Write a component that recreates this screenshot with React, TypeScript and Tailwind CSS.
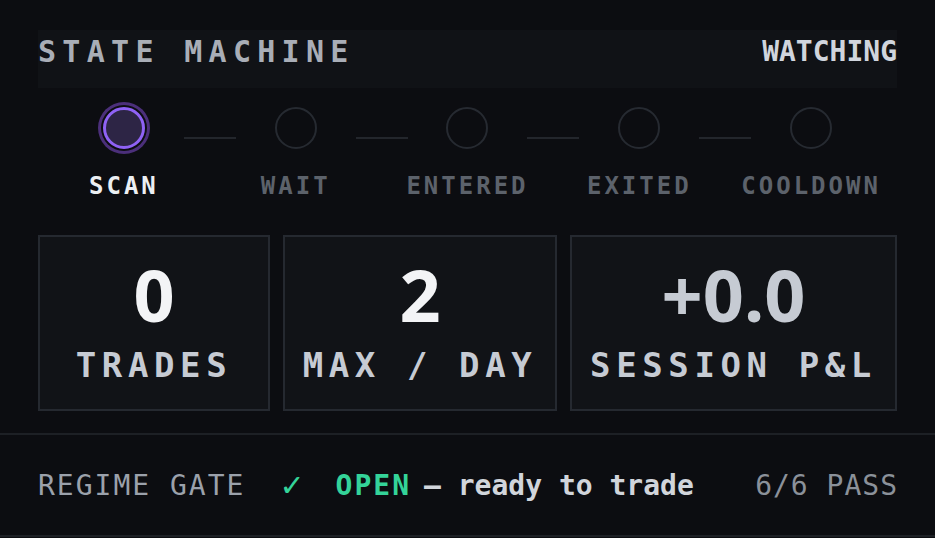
import React from 'react';

const mono = { fontFamily: '"DejaVu Sans Mono", "Liberation Mono", monospace' };

const steps = ['SCAN', 'WAIT', 'ENTERED', 'EXITED', 'COOLDOWN'];

const stats = [
  { value: '0', label: 'TRADES', width: 'w-[232px]', tone: 'text-[#f3f4f6]' },
  { value: '2', label: 'MAX / DAY', width: 'w-[274px]', tone: 'text-[#f3f4f6]' },
  { value: '+0.0', label: 'SESSION P&L', width: 'flex-1', tone: 'text-[#c6cbd3]' },
];

export default function App() {
  const active = 0;

  return (
    <div className="min-h-screen w-full bg-[#0c0d11] pt-[30px]" style={mono}>
      {/* header strip */}
      <div className="mx-[38px] h-[58px] bg-[#101216] flex items-start justify-between pt-[7px]">
        <h2 className="text-[30px] leading-[30px] font-bold tracking-[6.3px] text-[#a9aeb7]">STATE MACHINE</h2>
        <span className="text-[28px] leading-[30px] font-bold text-[#d0d5dd]">WATCHING</span>
      </div>

      {/* state steps */}
      <div className="mx-[38px] mt-[19px] grid grid-cols-5">
        {steps.map((s, i) => (
          <div key={s} className="relative flex flex-col items-center">
            {i === active ? (
              <div className="w-[42px] h-[42px] rounded-full border-[3px] border-[#8f62f5] bg-[#2d2545] shadow-[0_0_0_2px_#0c0d11,0_0_0_5px_#4b2f7a]" />
            ) : (
              <div className="w-[42px] h-[42px] rounded-full border-2 border-[#262a31]" />
            )}
            {i < steps.length - 1 && (
              <div className="absolute top-[30px] right-[-26px] w-[52px] h-[2px] bg-[#23262c]" />
            )}
            <span
              className={`mt-[25px] text-[24px] leading-[24px] font-bold tracking-[3px] ${
                i === active ? 'text-[#eceff3]' : 'text-[#5c626b]'
              }`}
            >
              {s}
            </span>
          </div>
        ))}
      </div>

      {/* stat cards */}
      <div className="mx-[38px] mt-[37px] flex gap-[13px]">
        {stats.map((st) => (
          <div
            key={st.label}
            className={`${st.width} h-[176px] border-2 border-[#252930] bg-[#111317] flex flex-col items-center pt-[21px]`}
          >
            <span
              className={`text-[72px] leading-[72px] font-bold ${st.tone}`}
              style={{ fontFamily: '"Noto Sans", "Open Sans", sans-serif' }}
            >
              {st.value}
            </span>
            <span className="mt-[18px] text-[34px] leading-[34px] font-bold tracking-[5.6px] text-[#c6cbd3] whitespace-nowrap">
              {st.label}
            </span>
          </div>
        ))}
      </div>

      {/* regime gate */}
      <div className="mt-[22px] h-[104px] border-y-2 border-[#1d2025] pl-[38px] pr-[37px] pt-[2px] flex items-center text-[28px] leading-[28px]">
        <span className="tracking-[2px] text-[#9ba1ab]">REGIME GATE</span>
        <span
          className="ml-[34px] text-[30px] text-[#34d399]"
          style={{ fontFamily: '"DejaVu Sans", sans-serif' }}
        >
          ✓
        </span>
        <span className="ml-[31px] font-bold tracking-[2px] text-[#34d399]">OPEN</span>
        <span className="ml-[13px] font-bold text-[#d1d5db]">— ready to trade</span>
        <span className="ml-auto tracking-[1px] text-[#8b919a]">6/6 PASS</span>
      </div>
    </div>
  );
}
